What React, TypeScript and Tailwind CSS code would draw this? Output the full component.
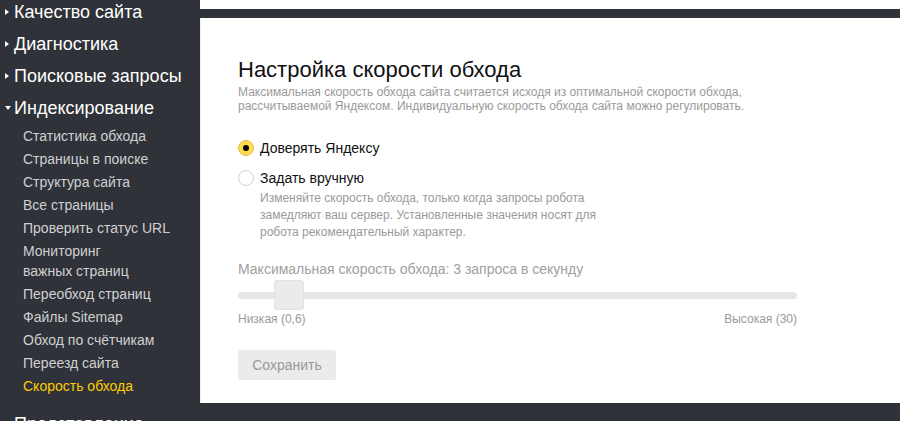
import { useState } from "react";

const topItems = ["Качество сайта", "Диагностика", "Поисковые запросы"];

const subItems = [
  "Статистика обхода",
  "Страницы в поиске",
  "Структура сайта",
  "Все страницы",
  "Проверить статус URL",
  "Мониторинг\nважных страниц",
  "Переобход страниц",
  "Файлы Sitemap",
  "Обход по счётчикам",
  "Переезд сайта",
  "Скорость обхода",
];

function RightTriangle() {
  return <span className="w-0 h-0 border-l-[4px] border-l-white border-y-[3.5px] border-y-transparent mr-[5px]" />;
}

function DownTriangle() {
  return <span className="w-0 h-0 border-t-[4px] border-t-white border-x-[3.5px] border-x-transparent mr-[3px]" />;
}

export default function App() {
  const [mode, setMode] = useState<"auto" | "manual">("auto");

  return (
    <div className="w-[900px] h-[421px] overflow-hidden flex bg-[#2f3238] font-['Liberation_Sans',Arial,sans-serif]">
      {/* sidebar */}
      <div className="w-[200px] shrink-0 -mt-[4px]">
        {topItems.map((item) => (
          <div key={item} className="flex items-center h-[32px] pl-[5px] text-[18px] text-white">
            <RightTriangle />
            {item}
          </div>
        ))}
        <div className="flex items-center h-[32px] pl-[5px] text-[18px] text-white">
          <DownTriangle />
          Индексирование
        </div>
        <div>
          {subItems.map((item) => (
            <div
              key={item}
              className={`pl-[23px] py-[1.5px] leading-[20px] text-[14px] whitespace-pre-line ${
                item === "Скорость обхода" ? "text-[#ffcc00]" : "text-[#cfd0d2]"
              }`}
            >
              {item}
            </div>
          ))}
        </div>
        <div className="flex items-center h-[32px] mt-[11px] pl-[5px] text-[18px] text-white">
          <RightTriangle />
          Представление
        </div>
      </div>

      {/* main */}
      <div className="flex-1 flex flex-col">
        <div className="h-[9px] bg-white" />
        <div className="h-[9px]" />
        <div className="h-[385px] bg-white pl-[37px] pt-[39px] border-l border-[#eeeeee]">
          <h1 className="text-[22px] leading-[26px] text-[#111]">Настройка скорости обхода</h1>
          <p className="mt-[2px] text-[12px] leading-[14px] text-[#9a9a9a]">
            Максимальная скорость обхода сайта считается исходя из оптимальной скорости обхода,
            <br />
            рассчитываемой Яндексом. Индивидуальную скорость обхода сайта можно регулировать.
          </p>

          <div className="mt-[25px] flex flex-col">
            <label className="flex items-center h-[20px] cursor-pointer" onClick={() => setMode("auto")}>
              <span
                className={`w-[16px] h-[16px] rounded-full flex items-center justify-center ${
                  mode === "auto" ? "bg-[#ffdb4d] border border-[#e0c050]" : "border border-[#d0d0d0] bg-white"
                }`}
              >
                {mode === "auto" && <span className="w-[6px] h-[6px] rounded-full bg-black" />}
              </span>
              <span className="ml-[6px] text-[14px] text-[#111]">Доверять Яндексу</span>
            </label>
            <label className="flex items-center h-[20px] mt-[10px] cursor-pointer" onClick={() => setMode("manual")}>
              <span
                className={`w-[16px] h-[16px] rounded-full flex items-center justify-center ${
                  mode === "manual" ? "bg-[#ffdb4d] border border-[#e0c050]" : "border border-[#d0d0d0] bg-white"
                }`}
              >
                {mode === "manual" && <span className="w-[6px] h-[6px] rounded-full bg-black" />}
              </span>
              <span className="ml-[6px] text-[14px] text-[#111]">Задать вручную</span>
            </label>
            <p className="ml-[22px] mt-[2px] text-[12px] leading-[17px] text-[#9a9a9a]">
              Изменяйте скорость обхода, только когда запросы робота
              <br />
              замедляют ваш сервер. Установленные значения носят для
              <br />
              робота рекомендательный характер.
            </p>
          </div>

          <div className="mt-[19px] w-[559px]">
            <div className="text-[14px] leading-[18px] text-[#a0a0a0]">
              Максимальная скорость обхода: 3 запроса в секунду
            </div>
            <div className="relative mt-[2px] h-[30px] flex items-center">
              <div className="w-full h-[7px] rounded-full bg-[#e6e6e6]" />
              <div className="absolute left-[36px] top-0 w-[30px] h-[30px] rounded-[3px] bg-[#ebebeb] border border-[#e2e2e2]" />
            </div>
            <div className="flex justify-between mt-[1px] text-[12px] leading-[16px] text-[#9a9a9a]">
              <span>Низкая (0,6)</span>
              <span>Высокая (30)</span>
            </div>
          </div>

          <button className="mt-[23px] h-[30px] w-[98px] rounded-[3px] bg-[#ebebeb] text-[14px] text-[#999]">
            Сохранить
          </button>
        </div>
      </div>
    </div>
  );
}
